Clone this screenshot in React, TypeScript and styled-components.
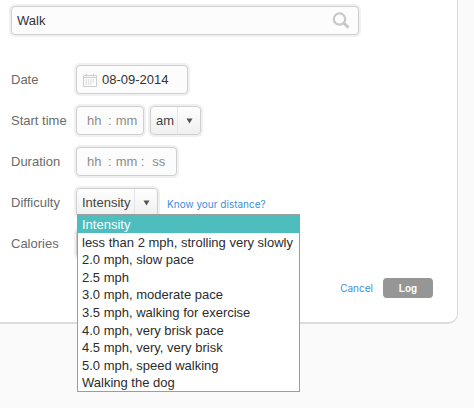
import React, { useState } from "react";
import styled, { createGlobalStyle } from "styled-components";

const GlobalStyle = createGlobalStyle`
  * { box-sizing: border-box; }
  body {
    margin: 0;
    background: #fafafa;
    color: #333;
    font: 13px/16px "Liberation Sans", Arial, sans-serif;
  }
  input, select, button { font: inherit; color: inherit; }
`;

const Page = styled.main`
  min-height: 100vh;
`;

const Card = styled.form`
  margin-right: 16px;
  padding: 6px 24px 24px 11px;
  background: #fff;
  border: solid #dcdcdc;
  border-width: 0 1px 2px 0;
  border-radius: 0 0 10px 0;
`;

const Field = styled.div<{ $width?: number; $pad?: number }>`
  display: flex;
  align-items: center;
  width: ${(p) => (p.$width ? `${p.$width}px` : "auto")};
  height: 29px;
  padding: 0 ${(p) => p.$pad ?? 5}px;
  background: #fcfcfc;
  border: 1px solid #cfcfcf;
  border-radius: 4px;
  box-shadow: 0 0 0 2px #f0f0f0;
  color: #8c8c8c;
`;

const SearchField = styled(Field)`
  max-width: 348px;
  margin-bottom: 30px;
`;

const TextInput = styled.input<{ $width?: number }>`
  flex: ${(p) => (p.$width ? "none" : "1")};
  width: ${(p) => (p.$width ? `${p.$width}px` : "auto")};
  min-width: 0;
  padding: 0;
  border: 0;
  outline: 0;
  background: transparent;
  color: #333;
  &::placeholder { color: #8c8c8c; opacity: 1; }
`;

const IconButton = styled.button`
  display: flex;
  padding: 0;
  border: 0;
  background: none;
`;

const Rows = styled.div`
  display: grid;
  gap: 12px;
`;

const Row = styled.div`
  display: grid;
  grid-template-columns: 65px 1fr;
  align-items: center;
`;

const Label = styled.label`
  color: #6a6a6a;
`;

const Controls = styled.div`
  position: relative;
  display: flex;
  align-items: center;
  gap: 6px;
`;

const CalendarIcon = styled.svg`
  flex: none;
  margin: 0 5px 0 1px;
`;

const Colon = styled.span<{ $gap: number }>`
  padding-right: ${(p) => p.$gap}px;
`;

const SelectBox = styled.div<{ $width: number }>`
  position: relative;
  width: ${(p) => p.$width}px;
  height: 29px;
  border: 1px solid #cfcfcf;
  border-radius: 4px;
  background: linear-gradient(#fff, #efefef);
  box-shadow: 0 0 0 2px #f0f0f0;
`;

const Select = styled.select`
  appearance: none;
  width: 100%;
  height: 100%;
  padding: 0 24px 0 5px;
  border: 0;
  outline: 0;
  background: transparent;
  color: #444;
`;

const Arrow = styled.span`
  position: absolute;
  top: 0;
  right: 0;
  bottom: 0;
  display: flex;
  align-items: center;
  width: 23px;
  padding-left: 8px;
  border-left: 1px solid #e6e6e6;
  pointer-events: none;
`;

const SmallLink = styled.a`
  color: #3c8fdc;
  font: 10px/16px Inter, "Liberation Sans", sans-serif;
  text-decoration: none;
`;

const HelpLink = styled(SmallLink)`
  padding: 2px 0 0 3px;
`;

const Menu = styled.ul`
  position: absolute;
  z-index: 1;
  top: 26px;
  left: 1px;
  display: grid;
  grid-template-rows: repeat(10, minmax(0, 1fr));
  width: 223px;
  height: 178px;
  margin: 0;
  padding: 0;
  border: 1px solid #9c9c9c;
  background: #fff;
  list-style: none;
`;

const MenuItem = styled.li<{ $active: boolean }>`
  padding: 1px 0 0 4px;
  color: ${(p) => (p.$active ? "#fff" : "#2c2c2c")};
  background: ${(p) => (p.$active ? "#4dbdbd" : "transparent")};
  line-height: 18px;
  white-space: nowrap;
`;

const Actions = styled.div`
  display: flex;
  justify-content: flex-end;
  align-items: center;
  gap: 10px;
  margin-top: 20px;
`;

const LogButton = styled.button`
  width: 50px;
  height: 20px;
  padding: 2px 0 0;
  border: 0;
  border-radius: 4px;
  background: #969696;
  color: #fff;
  font-size: 10px;
  font-weight: bold;
`;

const levels = [
  "Intensity",
  "less than 2 mph, strolling very slowly",
  "2.0 mph, slow pace",
  "2.5 mph",
  "3.0 mph, moderate pace",
  "3.5 mph, walking for exercise",
  "4.0 mph, very brisk pace",
  "4.5 mph, very, very brisk",
  "5.0 mph, speed walking",
  "Walking the dog",
];

function DropDown(props: {
  id: string;
  width: number;
  options: string[];
  value: string;
  onChange: (value: string) => void;
}) {
  return (
    <SelectBox $width={props.width}>
      <Select id={props.id} aria-label={props.id} value={props.value} onChange={(e) => props.onChange(e.target.value)}>
        {props.options.map((o) => (
          <option key={o}>{o}</option>
        ))}
      </Select>
      <Arrow>
        <svg width="7" height="6" viewBox="0 0 7 6" aria-hidden="true">
          <path d="M0.5 0.5h6L3.5 5.5z" fill="#555" />
        </svg>
      </Arrow>
    </SelectBox>
  );
}

export default function App() {
  const [period, setPeriod] = useState("am");
  const [level, setLevel] = useState(levels[0]);

  return (
    <Page>
      <GlobalStyle />
      <Card onSubmit={(e) => e.preventDefault()}>
        <SearchField $pad={5}>
          <TextInput aria-label="Activity" defaultValue="Walk" />
          <IconButton type="button" aria-label="Search">
            <svg width="21" height="20" viewBox="0 0 21 20" fill="none" stroke="#c8c8c8">
              <circle cx="7.5" cy="8" r="5.7" strokeWidth="2.2" />
              <path d="M11.8 12l4.6 4.6" strokeWidth="3" />
            </svg>
          </IconButton>
        </SearchField>

        <Rows>
          <Row>
            <Label htmlFor="date">Date</Label>
            <Controls>
              <Field $width={112}>
                <CalendarIcon width="14" height="14" viewBox="0 0 14 14" fill="none" stroke="#cecece" aria-hidden="true">
                  <path d="M0.5 2.5h13v11H0.5zM1 4.5h12M3.5 0.5v3M10.5 0.5v3" />
                  <path d="M2.5 7h9M2.5 9h9M2.5 11h7" strokeDasharray="1.4 1" />
                </CalendarIcon>
                <TextInput id="date" defaultValue="08-09-2014" />
              </Field>
            </Controls>
          </Row>

          <Row>
            <Label htmlFor="start">Start time</Label>
            <Controls>
              <Field $width={68} $pad={10}>
                <TextInput id="start" $width={21} placeholder="hh" />
                <Colon $gap={4}>:</Colon>
                <TextInput aria-label="Start minutes" $width={24} placeholder="mm" />
              </Field>
              <DropDown id="period" width={51} options={["am", "pm"]} value={period} onChange={setPeriod} />
            </Controls>
          </Row>

          <Row>
            <Label htmlFor="duration">Duration</Label>
            <Controls>
              <Field $width={101} $pad={10}>
                <TextInput id="duration" $width={21} placeholder="hh" />
                <Colon $gap={4}>:</Colon>
                <TextInput aria-label="Duration minutes" $width={25} placeholder="mm" />
                <Colon $gap={8}>:</Colon>
                <TextInput aria-label="Duration seconds" $width={15} placeholder="ss" />
              </Field>
            </Controls>
          </Row>

          <Row>
            <Label htmlFor="intensity">Difficulty</Label>
            <Controls>
              <DropDown id="intensity" width={82} options={levels} value={level} onChange={setLevel} />
              <HelpLink href="#distance">Know your distance?</HelpLink>
              <Menu role="listbox" aria-label="Intensity">
                {levels.map((l) => (
                  <MenuItem key={l} role="option" aria-selected={l === level} $active={l === level} onClick={() => setLevel(l)}>
                    {l}
                  </MenuItem>
                ))}
              </Menu>
            </Controls>
          </Row>

          <Row>
            <Label htmlFor="calories">Calories</Label>
            <Controls>
              <Field $width={68}>
                <TextInput id="calories" />
              </Field>
            </Controls>
          </Row>
        </Rows>

        <Actions>
          <SmallLink href="#cancel">Cancel</SmallLink>
          <LogButton type="submit">Log</LogButton>
        </Actions>
      </Card>
    </Page>
  );
}
